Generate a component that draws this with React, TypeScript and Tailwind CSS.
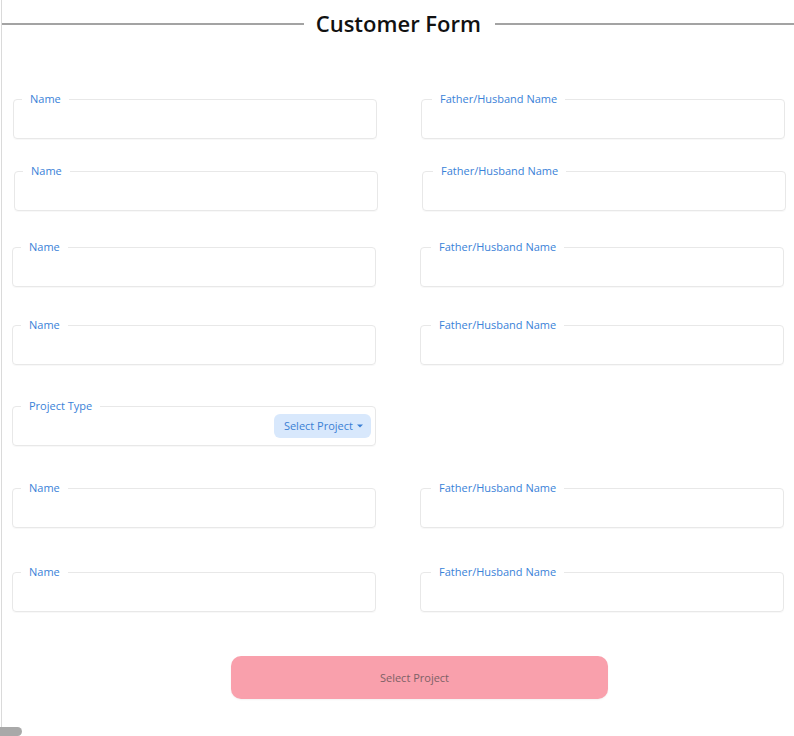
import React from "react";

const Field = ({ label, className = "", legendClass = "ml-[8px]", children }: { label: string; className?: string; legendClass?: string; children?: React.ReactNode }) => (
  <fieldset className={`w-[364px] border border-[#e8e8e8] rounded-[4px] shadow-[0_1px_1px_rgba(0,0,0,0.03)] ${className}`}>
    <legend className={`${legendClass} px-[8px] text-[11px] leading-[16px] text-[#3a82d8]`}>{label}</legend>
    {children ?? <input className="block w-full h-[31px] outline-none bg-transparent" />}
  </fieldset>
);

const Row = ({ className = "", shift = "" }: { className?: string; shift?: string }) => (
  <div className={`flex gap-[44px] ${className} ${shift}`}>
    <Field label="Name" />
    <Field label="Father/Husband Name" legendClass="ml-[10px]" />
  </div>
);

export default function App() {
  return (
    <div className="relative min-h-[736px] bg-white pl-px" style={{ fontFamily: '"Open Sans", sans-serif' }}>
      <div className="min-h-[736px] border-l border-[#dadada] pb-8">
        <div className="flex items-center gap-[12px] pt-[7px]">
          <div className="flex-1 h-[2px] bg-[#a3a3a3]" />
          <h1 className="text-[22px] leading-[33px] font-semibold text-[#111]">Customer Form</h1>
          <div className="w-[299px] ml-[2px] h-[2px] bg-[#a3a3a3]" />
        </div>
        <div className="flex flex-col pl-[10px]">
          <Row className="mt-[51px]" shift="ml-px" />
          <Row className="mt-[24px]" shift="ml-[2px]" />
          <Row className="mt-[28px]" />
          <Row className="mt-[30px]" />
          <div className="mt-[33px] flex">
            <Field label="Project Type">
              <div className="flex justify-end h-[31px] pr-[4px]">
                <button className="h-[24px] flex items-center gap-[4px] pl-[10px] pr-[8px] rounded-[6px] bg-[#d8e8fc] text-[11px] text-[#3a7fd4]">
                  Select Project
                  <svg width="6" height="4" viewBox="0 0 6 4"><path d="M0 0.5h6L3 3.5z" fill="#3a7fd4" /></svg>
                </button>
              </div>
            </Field>
          </div>
          <Row className="mt-[34px]" />
          <Row className="mt-[36px]" />
          <button className="mt-[44px] ml-[219px] w-[377px] h-[43px] pr-[10px] pt-[2px] rounded-[10px] bg-[#f9a0ac] text-[11px] text-[#7d6166] shadow-[0_1px_2px_rgba(0,0,0,0.05)]">
            Select Project
          </button>
        </div>
      </div>
      <div className="absolute left-0 bottom-0 w-[22px] h-[9px] rounded-r-full bg-[#a9a9a9]" />
    </div>
  );
}
